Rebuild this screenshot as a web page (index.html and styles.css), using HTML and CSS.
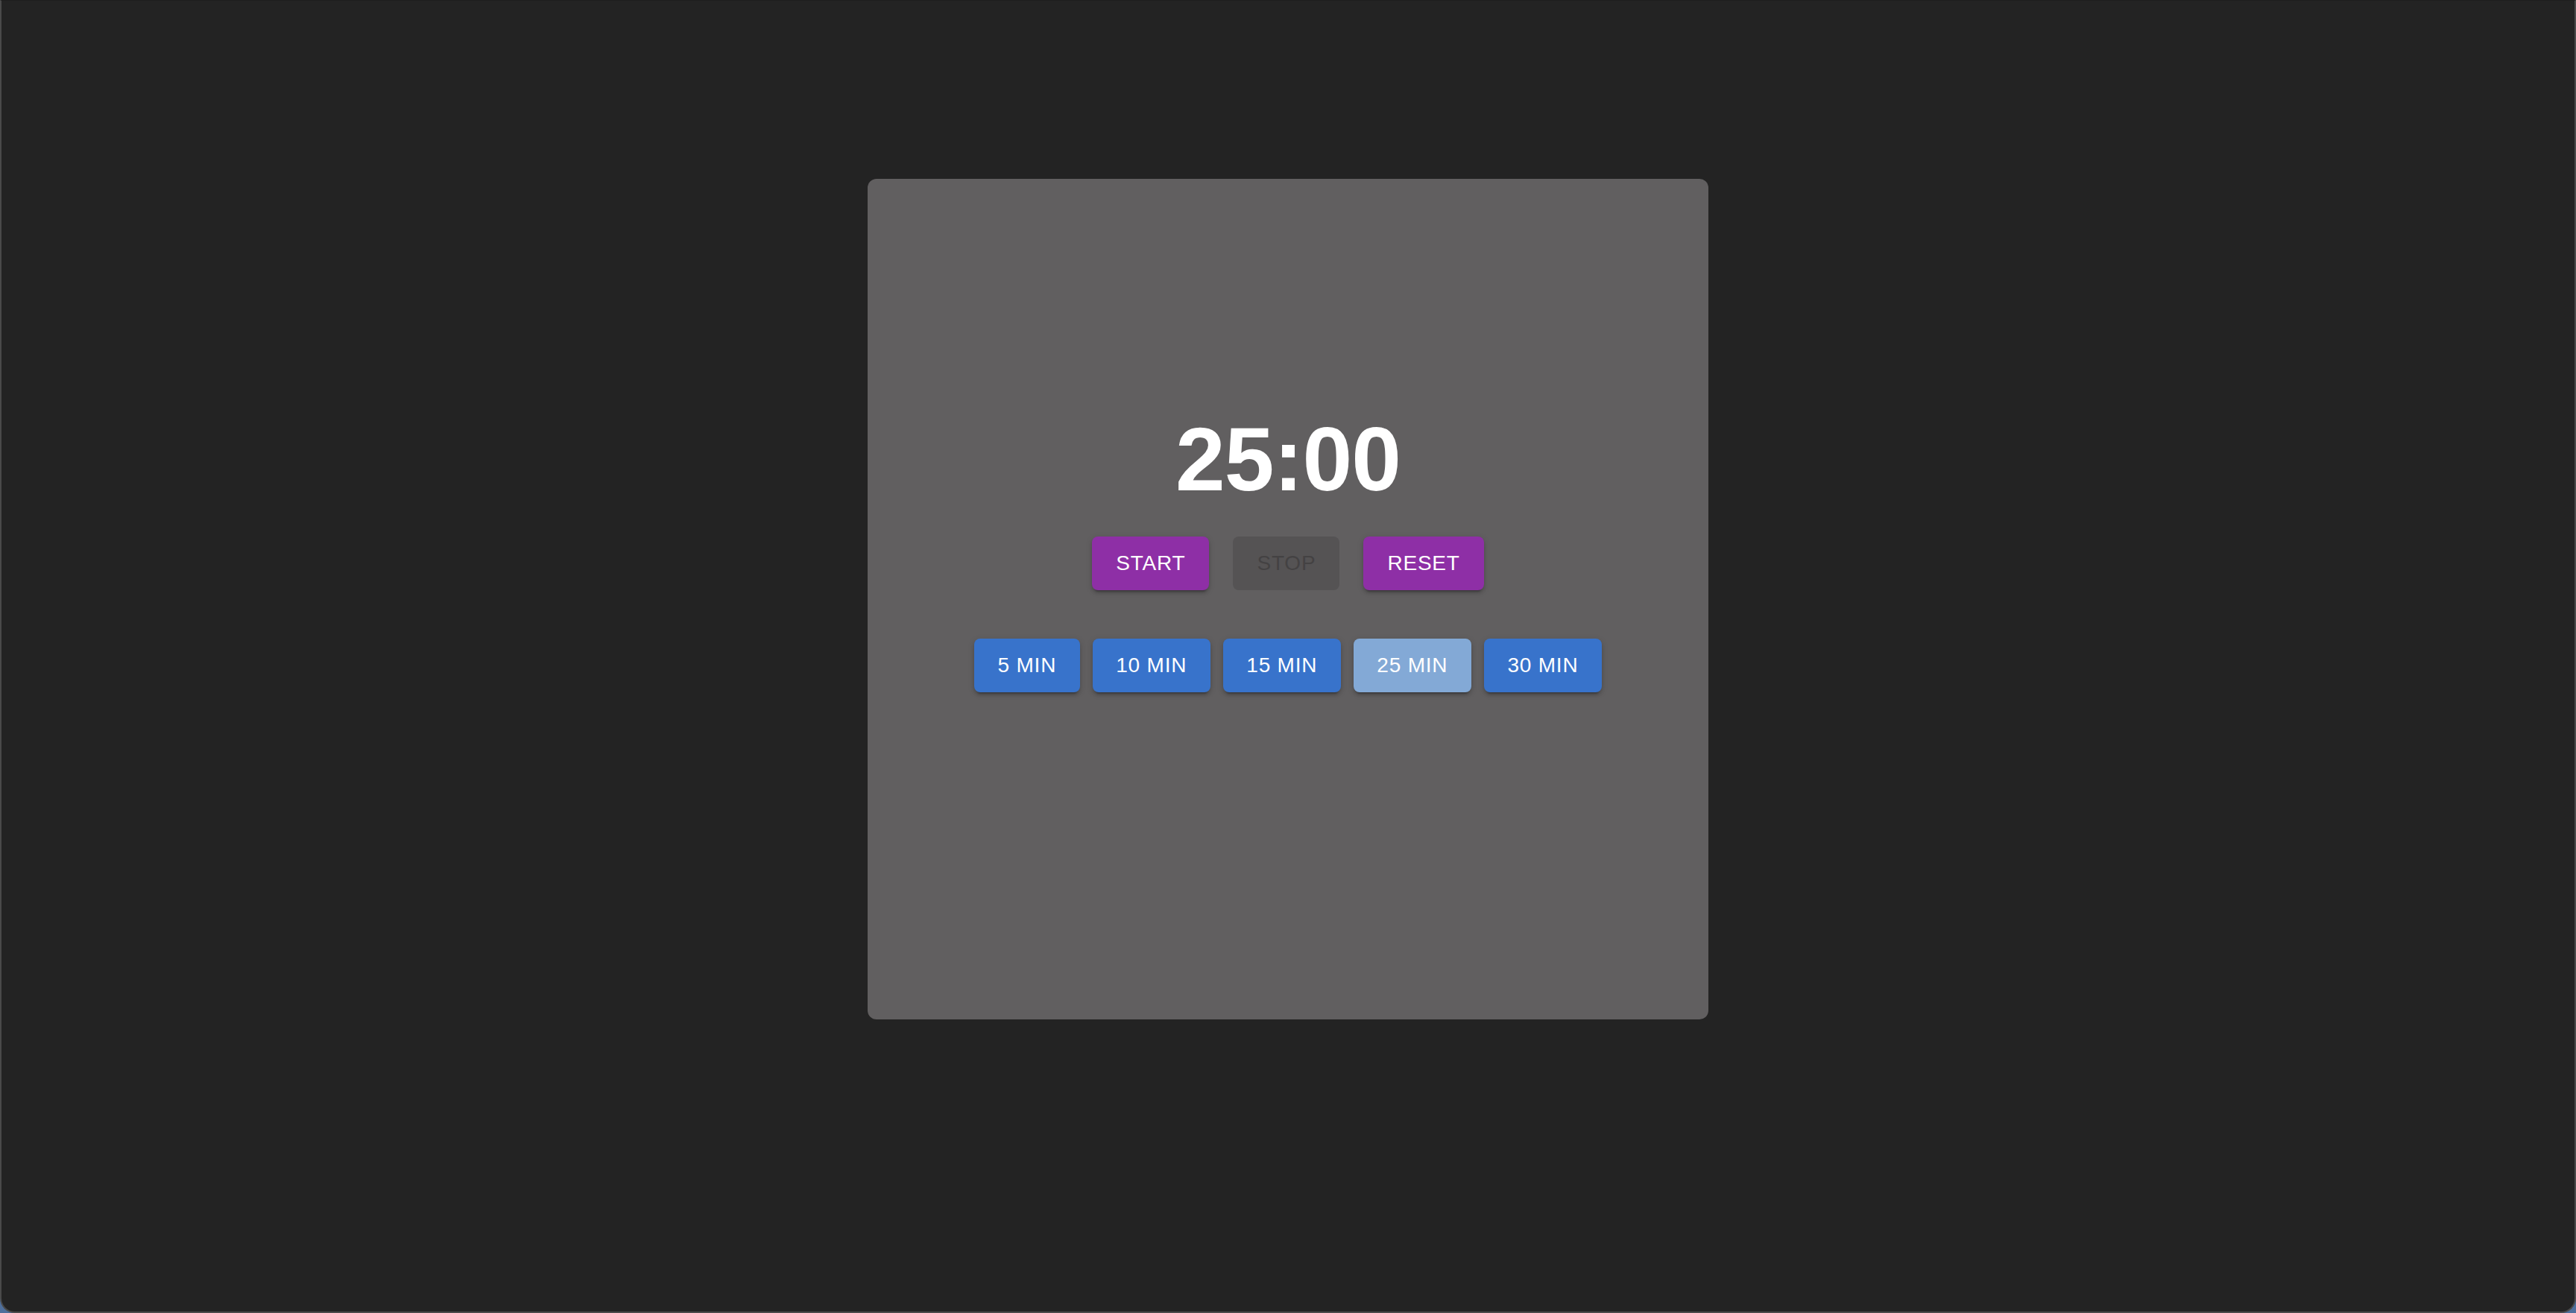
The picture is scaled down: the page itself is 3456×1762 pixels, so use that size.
FILE: index.html
```html
<!DOCTYPE html>
<html lang="en">
<head>
<meta charset="utf-8">
<title>Pomodoro Timer</title>
<link rel="stylesheet" href="styles.css">
</head>
<body>
<div class="window">
  <main class="card">
    <div class="timer">25:00</div>
    <div class="controls">
      <button class="btn btn-purple">START</button>
      <button class="btn btn-disabled" disabled>STOP</button>
      <button class="btn btn-purple">RESET</button>
    </div>
    <div class="presets">
      <button class="btn btn-blue">5 MIN</button>
      <button class="btn btn-blue">10 MIN</button>
      <button class="btn btn-blue">15 MIN</button>
      <button class="btn btn-blue btn-active">25 MIN</button>
      <button class="btn btn-blue">30 MIN</button>
    </div>
  </main>
</div>
</body>
</html>
```
FILE: styles.css
```css
* { box-sizing: border-box; }
html, body {
  margin: 0;
  padding: 0;
  height: 100%;
  background: #4f6f9c;
}
body {
  font-family: "Liberation Sans", Arial, sans-serif;
}
.window {
  height: 100vh;
  background: #232323;
  border: 2px solid #4a4a4a;
  border-top: 1px solid #1d1d1d;
  border-radius: 0 0 20px 20px;
  display: flex;
  flex-direction: column;
  align-items: center;
  padding-top: 239px;
}
.card {
  width: 1128px;
  height: 1128px;
  background: #615f60;
  border-radius: 12px;
  display: flex;
  flex-direction: column;
  align-items: center;
  padding-top: 304px;
}
.timer {
  color: #ffffff;
  font-size: 120px;
  font-weight: 700;
  letter-spacing: -1px;
  line-height: 144px;
  height: 144px;
}
.controls {
  margin-top: 32px;
  display: flex;
  gap: 32px;
}
.presets {
  margin-top: 65px;
  display: flex;
  gap: 17px;
}
.btn {
  font-family: "Liberation Sans", Arial, sans-serif;
  font-size: 28px;
  font-weight: 400;
  letter-spacing: 0.8px;
  line-height: 48px;
  height: 72px;
  padding: 12px 32px;
  min-width: 141px;
  border: none;
  border-radius: 8px;
  color: #ffffff;
  cursor: pointer;
  text-transform: uppercase;
  box-shadow: 0 6px 2px -4px rgba(0,0,0,0.2), 0 4px 4px 0 rgba(0,0,0,0.14), 0 2px 10px 0 rgba(0,0,0,0.12);
}
.presets .btn { padding: 12px 31.5px; }
.btn-purple { background: #8e2fa6; }
.btn-blue { background: #3873cb; }
.btn-active { background: #83a9d6; }
.btn-disabled {
  background: #555354;
  color: #444243;
  box-shadow: none;
  cursor: default;
}
```
